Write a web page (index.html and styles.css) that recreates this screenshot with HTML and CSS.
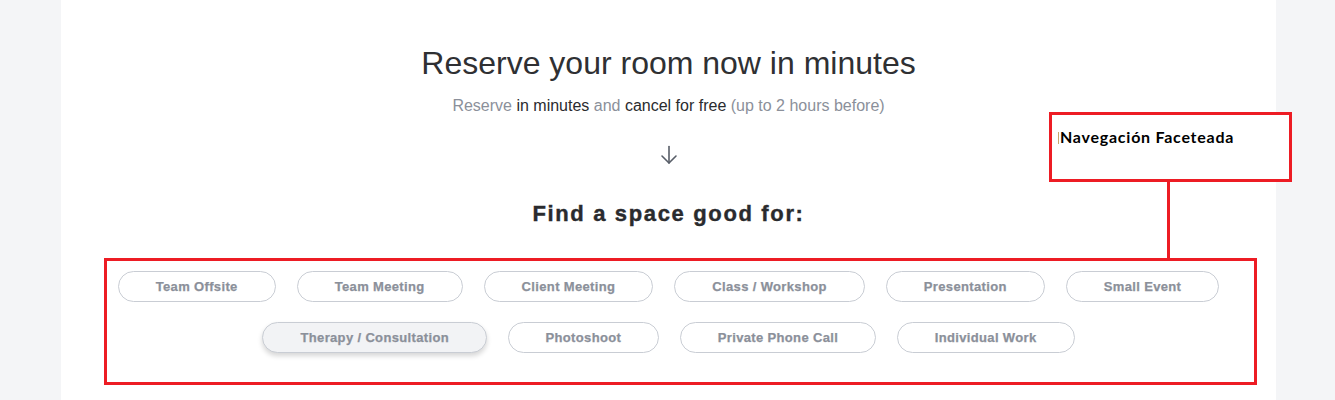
FILE: index.html
```html
<!DOCTYPE html>
<html>
<head>
<meta charset="utf-8">
<link rel="stylesheet" href="styles.css">
</head>
<body>
<div class="page">
  <main class="column">
    <h1 class="title">Reserve your room now in minutes</h1>
    <p class="subtitle"><span class="muted">Reserve</span> in minutes <span class="muted">and</span> cancel for free <span class="muted">(up to 2 hours before)</span></p>
    <div class="arrow">
      <svg width="18" height="20" viewBox="0 0 18 20" fill="none" stroke="#585e68" stroke-width="1.6" stroke-linecap="round" stroke-linejoin="round"><path d="M9 1.5V18"/><path d="M2 11l7 7 7-7"/></svg>
    </div>
    <h2 class="find">Find a space good for:</h2>
    <div class="chips">
      <div class="chip-row">
        <span class="chip">Team Offsite</span>
        <span class="chip">Team Meeting</span>
        <span class="chip">Client Meeting</span>
        <span class="chip">Class / Workshop</span>
        <span class="chip">Presentation</span>
        <span class="chip">Small Event</span>
      </div>
      <div class="chip-row">
        <span class="chip active">Therapy / Consultation</span>
        <span class="chip">Photoshoot</span>
        <span class="chip">Private Phone Call</span>
        <span class="chip">Individual Work</span>
      </div>
    </div>
  </main>
  <div class="anno-box"></div>
  <div class="anno-label"><span class="caret"></span><span class="anno-text">Navegación Faceteada</span></div>
  <div class="anno-line"></div>
</div>
</body>
</html>
```

FILE: styles.css
```css
html, body {
  margin: 0;
  padding: 0;
}
body {
  background: #f4f5f7;
  font-family: "Liberation Sans", Arial, sans-serif;
  height: 400px;
  overflow: hidden;
}
.page {
  position: relative;
  height: 400px;
}
.column {
  margin-left: 61px;
  width: 1215px;
  height: 400px;
  background: #ffffff;
  display: flex;
  flex-direction: column;
  align-items: center;
}
.title {
  margin: 45px 0 0 0;
  font-size: 32px;
  line-height: 37px;
  font-weight: normal;
  color: #2f3033;
}
.subtitle {
  margin: 14px 0 0 0;
  font-size: 16px;
  line-height: 20px;
  color: #2a2b2e;
}
.subtitle .muted {
  color: #8b909a;
}
.arrow {
  margin-top: 29px;
  height: 20px;
  display: flex;
}
.find {
  margin: 36px 0 0 0;
  font-size: 22px;
  line-height: 26px;
  font-weight: bold;
  letter-spacing: 1.65px;
  color: #2a2b2e;
  -webkit-text-stroke: 0.4px #2a2b2e;
}
.chips {
  margin-top: 44px;
  display: flex;
  flex-direction: column;
  align-items: center;
  gap: 20px;
}
.chip-row {
  display: flex;
  gap: 20.5px;
}
.chip-row:first-child {
  gap: 21px;
}
.chip {
  box-sizing: border-box;
  height: 31px;
  padding: 0 37px;
  border: 1px solid #c9cdd4;
  border-radius: 16px;
  display: flex;
  align-items: center;
  font-size: 13px;
  font-weight: bold;
  letter-spacing: 0.35px;
  color: #8b909a;
  -webkit-text-stroke: 0.25px #8b909a;
  background: #ffffff;
  white-space: nowrap;
}
.chip.active {
  background: #f2f3f5;
  box-shadow: 0 3px 5px rgba(0, 0, 0, 0.16);
}
.anno-box {
  position: absolute;
  left: 104px;
  top: 258px;
  width: 1147px;
  height: 121px;
  border: 3px solid #ed1c24;
}
.anno-label {
  position: absolute;
  left: 1049px;
  top: 112px;
  width: 237px;
  height: 52px;
  padding-top: 12px;
  border: 3px solid #ed1c24;
  background: #ffffff;
  font-family: "Lato", "Open Sans", sans-serif;
  font-weight: bold;
  font-size: 16px;
  line-height: 20px;
  letter-spacing: 0.75px;
  color: #000000;
  display: flex;
  align-items: flex-start;
}
.caret {
  width: 1px;
  height: 12px;
  margin: 5px 1px 0 6px;
  background: #c9a66a;
  flex: none;
}
.anno-line {
  position: absolute;
  left: 1167px;
  top: 181px;
  width: 3px;
  height: 78px;
  background: #ed1c24;
}
```
